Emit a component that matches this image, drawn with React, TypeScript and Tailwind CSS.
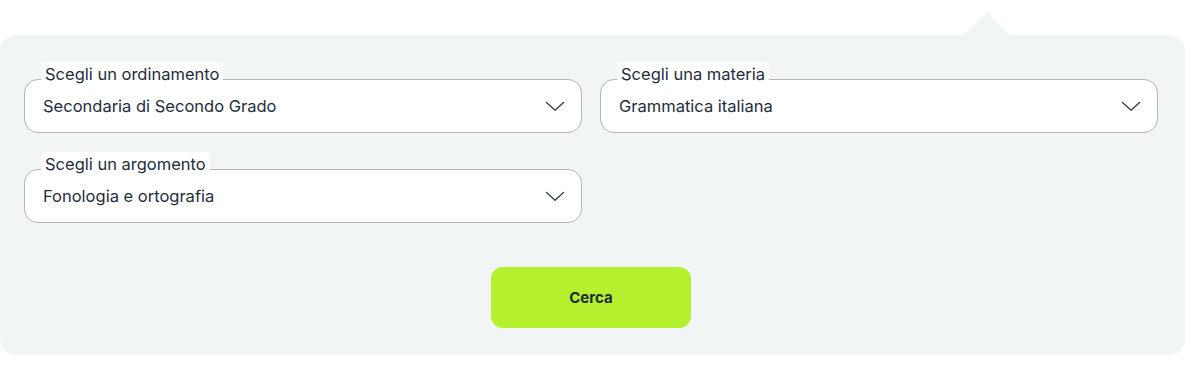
import React from "react";

function Chevron() {
  return (
    <svg width="20" height="11" viewBox="0 0 20 11" fill="none" className="shrink-0">
      <path d="M1.5 1.5L10 9.3L18.5 1.5" stroke="#2b3a48" strokeWidth="1.2" strokeLinecap="round" strokeLinejoin="round" />
    </svg>
  );
}

function Field({ label, value }: { label: string; value: string }) {
  return (
    <div className="relative h-[54px] rounded-[14px] border border-[#b3b6b7] bg-white flex items-center justify-between pl-[18px] pr-[16px]">
      <span className="absolute left-[16px] top-[-18px] bg-white px-[4px] pt-[2px] rounded-t-[4px] text-[16.5px] leading-[21px] text-[#1f2d3b]">
        {label}
      </span>
      <span className="text-[16.5px] text-[#1f2d3b] pt-[1px]">{value}</span>
      <Chevron />
    </div>
  );
}

export default function App() {
  return (
    <div className="w-[1200px] h-[380px] bg-white" style={{ fontFamily: "Inter, 'Noto Sans', sans-serif" }}>
      <div className="pt-[35px]">
        <div className="relative w-[1185px] h-[320px] rounded-[16px] bg-[#f1f5f4] pt-[44px] pl-[24px] pr-[27px]">
          <div className="absolute left-[964px] top-[-23px] w-0 h-0 border-l-[23px] border-r-[23px] border-b-[23px] border-l-transparent border-r-transparent border-b-[#f1f5f4]" />
          <div className="grid grid-cols-2 gap-x-[18px] gap-y-[36px]">
            <Field label="Scegli un ordinamento" value="Secondaria di Secondo Grado" />
            <Field label="Scegli una materia" value="Grammatica italiana" />
            <Field label="Scegli un argomento" value="Fonologia e ortografia" />
          </div>
          <div className="flex justify-center mt-[44px]">
            <button className="w-[200px] h-[61px] rounded-[12px] bg-[#b5f02f] pt-[2px] text-[15px] font-bold text-[#1c2b3a]">
              Cerca
            </button>
          </div>
        </div>
      </div>
    </div>
  );
}
